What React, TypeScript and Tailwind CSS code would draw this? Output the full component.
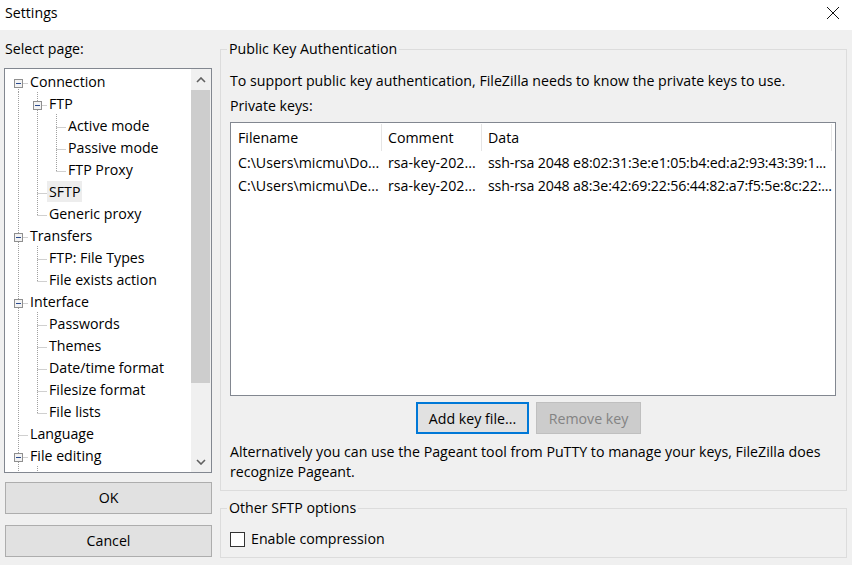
import React from 'react';

type Node = { label: string; children?: Node[]; selected?: boolean };

type Row = {
  label: string;
  level: number;
  open: boolean;
  hasNext: boolean;
  first: boolean;
  guides: boolean[];
  selected?: boolean;
};

const TREE: Node[] = [
  {
    label: 'Connection',
    children: [
      { label: 'FTP', children: [{ label: 'Active mode' }, { label: 'Passive mode' }, { label: 'FTP Proxy' }] },
      { label: 'SFTP', selected: true },
      { label: 'Generic proxy' },
    ],
  },
  { label: 'Transfers', children: [{ label: 'FTP: File Types' }, { label: 'File exists action' }] },
  {
    label: 'Interface',
    children: [
      { label: 'Passwords' },
      { label: 'Themes' },
      { label: 'Date/time format' },
      { label: 'Filesize format' },
      { label: 'File lists' },
    ],
  },
  { label: 'Language' },
  { label: 'File editing', children: [{ label: 'Filetype associations' }] },
  { label: 'Updates' },
];

function flatten(nodes: Node[], level: number, guides: boolean[], out: Row[]) {
  nodes.forEach((n, i) => {
    const hasNext = i < nodes.length - 1;
    out.push({
      label: n.label,
      level,
      open: !!n.children,
      hasNext,
      first: level === 0 && i === 0,
      guides,
      selected: n.selected,
    });
    if (n.children) flatten(n.children, level + 1, [...guides, hasNext], out);
  });
}

const ROWS: Row[] = [];
flatten(TREE, 0, [], ROWS);

const DOT = '#a0a0a0';

function TreeRow({ row }: { row: Row }) {
  const L = row.level;
  const cx = (k: number) => 13 + 19 * k + 0.5;
  const c = cx(L);
  return (
    <div className="flex h-[22px] items-center whitespace-nowrap">
      <svg width={23 + 19 * L} height={22} className="shrink-0">
        {row.guides.map((g, k) =>
          g ? <line key={k} x1={cx(k)} y1={0} x2={cx(k)} y2={22} stroke={DOT} strokeDasharray="1 1" /> : null
        )}
        <line x1={c} y1={row.first ? 13 : 0} x2={c} y2={row.hasNext ? 22 : 13} stroke={DOT} strokeDasharray="1 1" />
        <line x1={c} y1={13.5} x2={c + 9.5} y2={13.5} stroke={DOT} strokeDasharray="1 1" />
        {row.open && (
          <g>
            <rect x={c - 4} y={9.5} width={8} height={8} fill="#f3f3f3" stroke="#8f8f8f" />
            <line x1={c - 2.5} y1={13.5} x2={c + 2.5} y2={13.5} stroke="#2a4a8e" />
          </g>
        )}
      </svg>
      <span className={`px-[2px] leading-[21px] ${row.selected ? 'bg-[#ededed]' : ''}`}>{row.label}</span>
    </div>
  );
}

function Chevron({ up }: { up?: boolean }) {
  return (
    <svg width="10" height="6" viewBox="0 0 10 6">
      <path d={up ? 'M1 5 L5 1 L9 5' : 'M1 1 L5 5 L9 1'} fill="none" stroke="#606060" strokeWidth="1.6" />
    </svg>
  );
}

function PageTree() {
  return (
    <div className="flex h-[405px] border border-[#828790] bg-white">
      <div className="flex-1 overflow-hidden pt-px">
        {ROWS.map((r, i) => (
          <TreeRow key={i} row={r} />
        ))}
      </div>
      <div className="flex w-[20px] flex-col bg-[#f0f0f0]">
        <div className="flex h-[21px] items-center justify-center">
          <Chevron up />
        </div>
        <div className="mr-px h-[293px] bg-[#cdcdcd]" />
        <div className="flex-1" />
        <div className="flex h-[21px] items-center justify-center">
          <Chevron />
        </div>
      </div>
    </div>
  );
}

const KEYS = [
  ['C:\\Users\\micmu\\Do...', 'rsa-key-202...', 'ssh-rsa 2048 e8:02:31:3e:e1:05:b4:ed:a2:93:43:39:1...'],
  ['C:\\Users\\micmu\\De...', 'rsa-key-202...', 'ssh-rsa 2048 a8:3e:42:69:22:56:44:82:a7:f5:5e:8c:22:...'],
];

function KeyList() {
  return (
    <div className="mt-[7px] h-[274px] w-[606px] overflow-hidden border border-[#828790] bg-white">
      <div className="flex h-[28px] items-stretch pt-px">
        <div className="flex w-[151px] items-center border-r border-[#e5e5e5] pl-[7px]">Filename</div>
        <div className="flex w-[100px] items-center border-r border-[#e5e5e5] pl-[6px]">Comment</div>
        <div className="flex w-[350px] items-center border-r border-[#e5e5e5] pl-[6px]">Data</div>
      </div>
      {KEYS.map((k, i) => (
        <div key={i} className="flex h-[23px] items-center whitespace-nowrap">
          <div className="w-[151px] overflow-hidden pl-[7px]">{k[0]}</div>
          <div className="w-[100px] overflow-hidden pl-[6px]">{k[1]}</div>
          <div className="w-[350px] overflow-hidden pl-[6px] tracking-[-0.15px]">{k[2]}</div>
        </div>
      ))}
    </div>
  );
}

export default function App() {
  return (
    <div
      className="h-[565px] w-[852px] overflow-hidden bg-[#f0f0f0] text-[14.2px] leading-[20px] text-black"
      style={{ fontFamily: '"Open Sans", "Noto Sans", sans-serif' }}
    >
      {/* title bar */}
      <div className="flex h-[30px] items-start justify-between bg-white">
        <span className="pl-[5px] pt-[3px]">Settings</span>
        <svg width="14" height="14" viewBox="0 0 14 14" className="mr-[12px] mt-[6px]">
          <path d="M1 1 L13 13 M13 1 L1 13" stroke="#111" strokeWidth="1" />
        </svg>
      </div>

      <div className="flex">
        {/* left column */}
        <div className="ml-[4px] w-[208px] pt-[9px]">
          <div className="pl-px">Select page:</div>
          <div className="mt-[9px]">
            <PageTree />
          </div>
          <button className="ml-px mt-[9px] flex h-[32px] w-[207px] items-center justify-center border border-[#adadad] bg-[#e1e1e1]">
            OK
          </button>
          <button className="ml-px mt-[11px] flex h-[32px] w-[207px] items-center justify-center border border-[#adadad] bg-[#e1e1e1]">
            Cancel
          </button>
        </div>

        {/* right column */}
        <div className="ml-[8px] w-[627px] pt-[9px]">
          <fieldset className="h-[452px] border border-[#dcdcdc] pl-[9px] pr-[10px]">
            <legend className="ml-[-3px] px-[2px]">Public Key Authentication</legend>
            <div className="mt-[12px] whitespace-nowrap">
              To support public key authentication, FileZilla needs to know the private keys to use.
            </div>
            <div className="mt-[5px]">Private keys:</div>
            <div className="-mt-px">
              <KeyList />
            </div>
            <div className="mt-[6px] flex justify-center gap-[7px] pr-[9px]">
              <button className="flex h-[32px] w-[113px] items-center justify-center border-2 border-[#0078d7] bg-[#e1e1e1] pt-px">
                Add key file...
              </button>
              <button className="flex h-[32px] w-[105px] items-center justify-center border border-[#bfbfbf] bg-[#cccccc] pt-px text-[#838383]">
                Remove key
              </button>
            </div>
            <div className="mt-[8px] whitespace-nowrap">
              Alternatively you can use the Pageant tool from PuTTY to manage your keys, FileZilla does
              <br />
              recognize Pageant.
            </div>
          </fieldset>

          <fieldset className="mt-[7px] h-[60px] border border-[#dcdcdc] pl-[9px] pr-[10px]">
            <legend className="ml-[-3px] px-[2px]">Other SFTP options</legend>
            <label className="mt-[11px] flex h-[20px] items-center">
              <span className="h-[15px] w-[15px] border border-[#333333] bg-white" />
              <span className="ml-[6px]">Enable compression</span>
            </label>
          </fieldset>
        </div>
      </div>
    </div>
  );
}
